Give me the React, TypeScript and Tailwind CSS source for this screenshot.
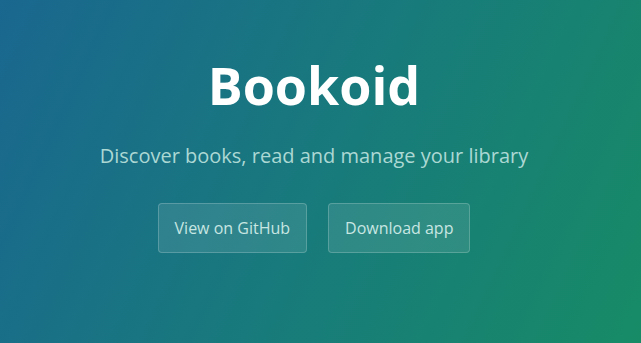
export default function App() {
  return (
    <div
      className="w-[641px] h-[343px] pr-[13px] flex flex-col items-center bg-[linear-gradient(115deg,#1a678f_0%,#187a7c_50%,#178b66_100%)]"
      style={{ fontFamily: '"Open Sans", sans-serif' }}
    >
      <h1 className="mt-[49px] text-[52px] leading-[72px] font-bold text-white">Bookoid</h1>
      <p className="mt-[22px] text-[20px] leading-[26px] text-[#acd8d4]">
        Discover books, read and manage your library
      </p>
      <div className="mt-[34px] flex gap-[21px]">
        <button className="h-[50px] px-[16px] rounded-[4px] border border-white/20 bg-white/10 text-[16px] text-[#c8e6e2]">
          View on GitHub
        </button>
        <button className="h-[50px] px-[16px] rounded-[4px] border border-white/20 bg-white/10 text-[16px] text-[#c8e6e2]">
          Download app
        </button>
      </div>
    </div>
  );
}
